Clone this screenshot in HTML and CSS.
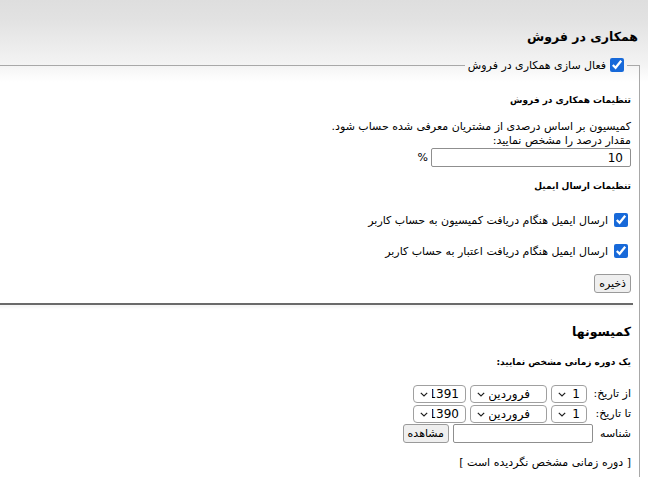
FILE: index.html
```html
<!DOCTYPE html>
<html lang="fa" dir="rtl">
<head>
<meta charset="UTF-8">
<meta name="viewport" content="width=device-width, initial-scale=1.0">
<title>همکاری در فروش</title>
<link rel="stylesheet" href="styles.css">
</head>
<body>

<div id="page">
    <h1 id="title">همکاری در فروش</h1>

    <fieldset id="affiliate">
        <legend>
            <label><input type="checkbox" checked> فعال سازی همکاری در فروش</label>
        </legend>

        <h4 class="first-title">تنظیمات همکاری در فروش</h4>
        <p class="note">
            کمیسیون بر اساس درصدی از مشتریان معرفی شده حساب شود.<br>
            مقدار درصد را مشخص نمایید:
        </p>
        <div class="percent">
            <input type="text" id="darsad" value="10"> %
        </div>

        <h4 class="mail-title">تنظیمات ارسال ایمیل</h4>
        <label class="check-row"><input type="checkbox" checked> ارسال ایمیل هنگام دریافت کمیسیون به حساب کاربر</label>
        <label class="check-row"><input type="checkbox" checked> ارسال ایمیل هنگام دریافت اعتبار به حساب کاربر</label>
        <div class="save-row"><button class="btn">ذخیره</button></div>

        <div class="rule"></div>

        <h3>کمیسونها</h3>
        <h4 class="range-title">یک دوره زمانی مشخص نمایید:</h4>

        <div class="range">
            <div class="range-row">
                <span class="lbl">از تاریخ:</span>
                <select class="sel-day"><option>1</option></select>
                <select class="sel-month"><option>فروردین</option></select>
                <select class="sel-year"><option>1391</option></select>
            </div>
            <div class="range-row">
                <span class="lbl">تا تاریخ:</span>
                <select class="sel-day"><option>1</option></select>
                <select class="sel-month"><option>فروردین</option></select>
                <select class="sel-year"><option>1390</option></select>
            </div>
            <div class="range-row">
                <span class="lbl">شناسه</span>
                <input type="text" id="shenase">
                <button class="btn">مشاهده</button>
            </div>
        </div>

        <p class="empty">[ دوره زمانی مشخص نگردیده است ]</p>
    </fieldset>
</div>

</body>
</html>
```

FILE: styles.css
```css
html {
    overflow: hidden;
}
body {
    font-family: "DejaVu Sans", sans-serif;
    font-size: 11px;
    color: #000;
    margin: 0;
    padding: 0;
    background: #fff linear-gradient(#dedede, #e2e2e2 20px, #f3f3f3 64px, #fff 82px) no-repeat;
    background-size: 100% 82px;
}
#page {
    padding: 26px 8px 0 8px;
    overflow: hidden;
}
#title {
    font-size: 12.5px;
    font-weight: bold;
    margin: 0 0 10px 0;
    padding-right: 2px;
    line-height: 22px;
}
#affiliate {
    margin: 0 0 0 -30px;
    padding: 9px 8px 0 8px;
    border: 1px solid #a8a8a8;
    border-bottom: none;
    min-height: 420px;
}
#affiliate legend {
    padding: 0 3px;
    margin-right: 4px;
}
#affiliate legend label {
    display: flex;
    align-items: center;
    gap: 4px;
}
input[type=checkbox] {
    width: 14px;
    height: 14px;
    margin: 0;
    accent-color: #1769d9;
}
h4 {
    font-size: 9px;
    font-weight: bold;
    margin: 14px 0 15px 0;
}
.note {
    margin: 0;
    line-height: 14px;
}
.percent {
    display: flex;
    align-items: center;
    gap: 3px;
}
input[type=text] {
    box-sizing: border-box;
    height: 19px;
    border: 1px solid #8f8f8f;
    border-radius: 2px;
    font-family: inherit;
    font-size: 12px;
}
#darsad {
    width: 200px;
    padding: 0 7px;
}
.mail-title {
    margin-top: 14px;
    margin-bottom: 22px;
}
.check-row {
    display: flex;
    align-items: center;
    gap: 6px;
    padding-right: 3px;
    margin-bottom: 17px;
}
.save-row {
    margin-top: -1px;
}
.btn {
    font-family: inherit;
    font-size: 11px;
    padding: 1px 4px;
    height: 19px;
    border: 1px solid #9a9a9a;
    border-radius: 3px;
    background: #efefef;
}
.rule {
    border-top: 2px solid #6a6a6a;
    box-shadow: 0 2px 3px #eee;
    margin: 10px -2px 0 0;
}
h3 {
    font-size: 12.5px;
    font-weight: bold;
    margin: 17px 0 0 0;
    line-height: 20px;
}
.range-title {
    margin-top: 15px;
    margin-bottom: 17px;
}
.range-row {
    display: flex;
    align-items: center;
    gap: 4px;
    height: 19px;
    margin-bottom: 1px;
}
.lbl {
    white-space: nowrap;
    min-width: 40px;
}
select {
    appearance: none;
    box-sizing: border-box;
    height: 18px;
    font-family: inherit;
    font-size: 12px;
    border: 1px solid #a0a0a0;
    border-radius: 4px;
    padding: 0 6px 0 18px;
    background: #fff url("data:image/svg+xml;utf8,<svg xmlns='http://www.w3.org/2000/svg' width='8' height='5' viewBox='0 0 8 5'><path d='M0.8 0.8 L4 4 L7.2 0.8' fill='none' stroke='%23222' stroke-width='1.2'/></svg>") no-repeat 6px 6px;
}
.sel-day {
    width: 36px;
}
.sel-month {
    width: 77px;
    padding-right: 16px;
}
.sel-year {
    width: 53px;
}
#shenase {
    width: 140px;
    margin-right: -6px;
}
.empty {
    margin: 13px 0 0 0;
}
```
